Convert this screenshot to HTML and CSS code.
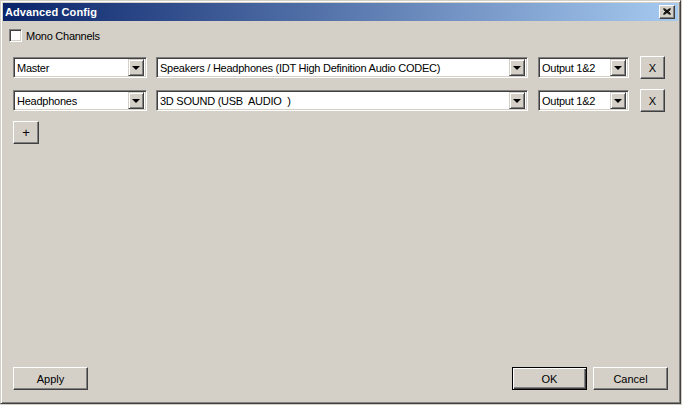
FILE: index.html
```html
<!DOCTYPE html>
<html>
<head>
    <meta charset="utf-8">
    <title>Advanced Config</title>
    <link rel="stylesheet" href="styles.css">
</head>
<body>
    <div class="window">
        <div class="titlebar">
            <span class="title">Advanced Config</span>
            <div class="close">
                <svg width="8" height="7" viewBox="0 0 8 7"><path d="M0.5 0.5 L7.5 6.5 M1.5 0.5 L7.5 5.5 M0.5 1.5 L6.5 6.5 M7.5 0.5 L0.5 6.5 M6.5 0.5 L0.5 5.5 M7.5 1.5 L1.5 6.5" stroke="#000" stroke-width="1" fill="none"/></svg>
            </div>
        </div>

        <div class="content">
            <div class="mono">
                <div class="checkbox"></div>
                <span>Mono Channels</span>
            </div>

            <div class="row first">
                <div class="combo c-name"><span>Master</span><div class="drop"><i></i></div></div>
                <div class="combo c-device"><span>Speakers / Headphones (IDT High Definition Audio CODEC)</span><div class="drop"><i></i></div></div>
                <div class="combo c-out"><span>Output 1&amp;2</span><div class="drop"><i></i></div></div>
                <button class="btn btn-x">X</button>
            </div>
            <div class="row">
                <div class="combo c-name"><span>Headphones</span><div class="drop"><i></i></div></div>
                <div class="combo c-device"><span>3D SOUND (USB&nbsp; AUDIO&nbsp; )</span><div class="drop"><i></i></div></div>
                <div class="combo c-out"><span>Output 1&amp;2</span><div class="drop"><i></i></div></div>
                <button class="btn btn-x">X</button>
            </div>

            <button class="btn btn-add">+</button>

            <div class="footer">
                <button class="btn btn-wide">Apply</button>
                <div class="right">
                    <button class="btn btn-wide default">OK</button>
                    <button class="btn btn-wide">Cancel</button>
                </div>
            </div>
        </div>
    </div>
</body>
</html>
```

FILE: styles.css
```css
body {
    margin: 0;
    background-color: #d4d0c8;
    font: 11px "Liberation Sans", Arial, sans-serif;
    letter-spacing: -0.25px;
    color: #000;
}
.window {
    box-sizing: border-box;
    width: 681px;
    height: 404px;
    border: 1px solid;
    border-color: #d4d0c8 #404040 #404040 #d4d0c8;
    box-shadow: inset 1px 1px #fff, inset -1px -1px #808080;
    padding: 2px;
    display: flex;
    flex-direction: column;
}
.titlebar {
    height: 18px;
    background: linear-gradient(to right, #0a246a, #a6caf0);
    display: flex;
    align-items: center;
    justify-content: space-between;
    padding: 0 3px 0 2px;
}
.title {
    color: #fff;
    font-weight: bold;
    font-size: 11px;
    letter-spacing: 0.1px;
}
.close {
    box-sizing: border-box;
    width: 16px;
    height: 14px;
    background: #d4d0c8;
    border: 1px solid;
    border-color: #fff #404040 #404040 #fff;
    box-shadow: inset -1px -1px #808080;
    display: flex;
    align-items: center;
    justify-content: center;
    padding: 0 1px 1px 0;
}
.close svg {
    display: block;
}
.content {
    flex: 1;
    display: flex;
    flex-direction: column;
    padding: 0 10px 11px 10px;
}
.mono {
    display: flex;
    align-items: center;
    gap: 4px;
    margin: 8px 0 0 -4px;
    height: 13px;
}
.checkbox {
    box-sizing: border-box;
    width: 13px;
    height: 13px;
    background: #fff;
    border: 1px solid;
    border-color: #808080 #fff #fff #808080;
    box-shadow: inset 1px 1px #404040, inset -1px -1px #d4d0c8;
}
.row {
    display: flex;
    align-items: center;
    height: 23px;
    margin-top: 10px;
}
.row.first {
    margin-top: 14px;
}
.combo {
    box-sizing: border-box;
    height: 21px;
    background: #fff;
    border: 1px solid;
    border-color: #808080 #fff #fff #808080;
    box-shadow: inset 1px 1px #404040, inset -1px -1px #d4d0c8;
    padding: 2px 2px 2px 3px;
    display: flex;
    align-items: center;
    white-space: pre;
}
.combo span {
    flex: 1;
    overflow: hidden;
}
.drop {
    box-sizing: border-box;
    width: 16px;
    height: 17px;
    background: #d4d0c8;
    border: 1px solid;
    border-color: #d4d0c8 #404040 #404040 #d4d0c8;
    box-shadow: inset 1px 1px #fff, inset -1px -1px #808080;
    display: flex;
    align-items: center;
    justify-content: center;
}
.drop i {
    width: 0;
    height: 0;
    border-left: 4px solid transparent;
    border-right: 4px solid transparent;
    border-top: 4px solid #000;
    margin: 1px 1px 0 0;
}
.c-name {
    width: 134px;
}
.c-device {
    width: 372px;
    margin-left: 9px;
}
.c-out {
    width: 91px;
    margin-left: 10px;
}
.btn {
    box-sizing: border-box;
    background: #d4d0c8;
    border: 1px solid;
    border-color: #fff #404040 #404040 #fff;
    box-shadow: inset -1px -1px #808080;
    font: 11px "Liberation Sans", Arial, sans-serif;
    color: #000;
    padding: 0;
    height: 23px;
}
.btn-x {
    width: 25px;
    margin-left: 11px;
}
.btn-add {
    width: 26px;
    margin-top: 9px;
    font-size: 13px;
}
.footer {
    margin-top: auto;
    display: flex;
    justify-content: space-between;
}
.right {
    display: flex;
    gap: 6px;
}
.btn-wide {
    width: 75px;
}
.default {
    border: 1px solid #000;
    box-shadow: inset 1px 1px #fff, inset -1px -1px #404040, inset -2px -2px #808080;
}
```
